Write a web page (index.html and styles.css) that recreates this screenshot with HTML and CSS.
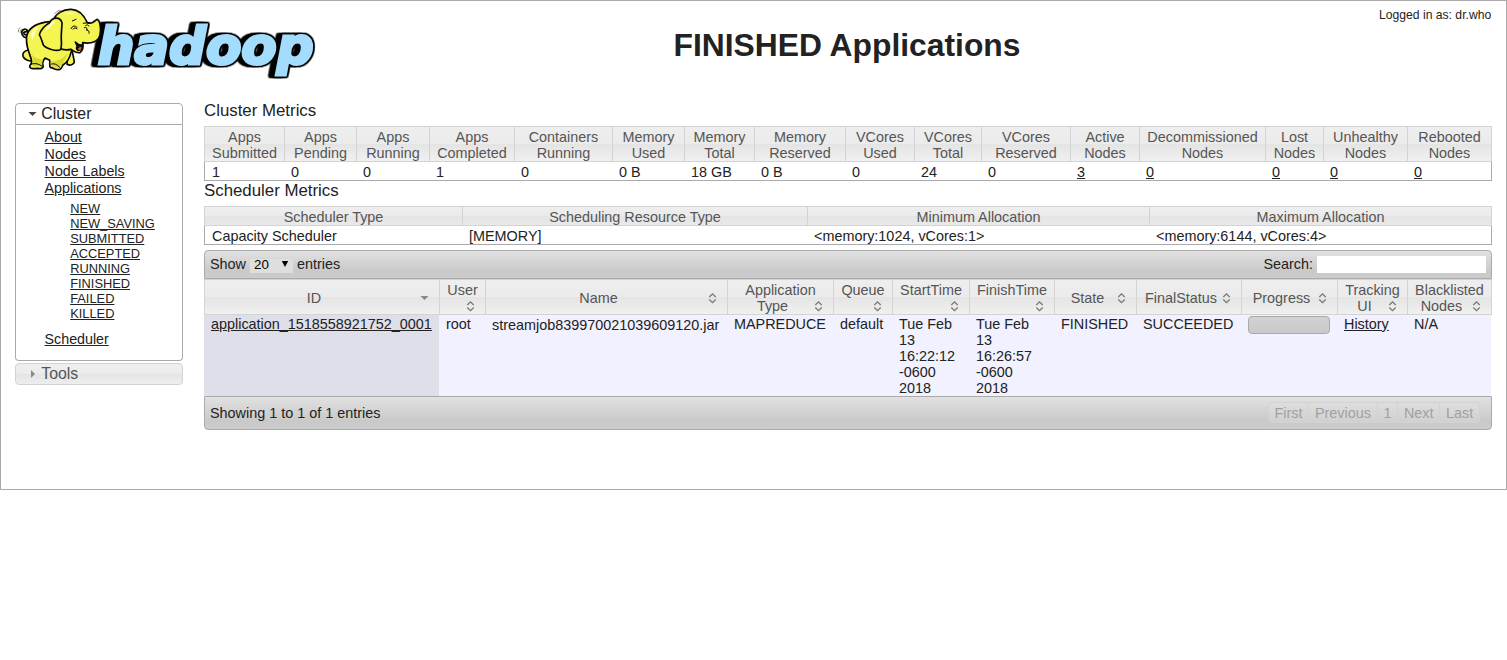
FILE: index.html
```html
<!DOCTYPE html>
<html lang="en">
<head>
<meta charset="utf-8">
<title>FINISHED Applications</title>
<link rel="stylesheet" href="styles.css">
</head>
<body>
<div class="page">
  <header class="header">
    <svg class="logo" width="310" height="76" viewBox="24 12 930 228" role="img" aria-label="hadoop">
      <text class="wordmark" x="293" y="193" textLength="648" lengthAdjust="spacingAndGlyphs">hadoop</text>
      <g class="elephant">
        <path class="skin" d="M78 112C74 114 66 108 65 98C65 88 76 84 83 92C80 98 75 93 71 98C72 105 79 106 84 104"/>
        <path class="skin" d="M84 150C74 152 66 160 69 169C73 179 87 183 94 183"/>
        <path class="skin" d="M196 168C201 177 203 186 201 193C211 198 221 194 223 186C221 174 218 160 216 150Z"/>
        <path class="skin" d="M150 65C118 68 90 77 81 104C75 128 84 148 89 164C95 180 98 188 90 196C86 207 101 207 112 205C122 208 132 204 129 196C126 190 131 180 135 174L149 181C151 190 146 198 152 203C162 203 166 212 180 208C187 204 186 198 190 194C201 188 209 175 214 154L220 140L158 70Z"/>
        <path class="skin" d="M158 66C166 40 190 27 214 28C239 29 254 50 262 68C275 75 288 60 291 58C300 61 304 86 300 104C296 124 275 133 248 128C249 143 250 151 240 158C227 160 219 151 213 148C198 151 188 150 177 145C157 128 154 98 158 66Z"/>
        <path class="skin" d="M186 68C180 50 158 50 149 68C134 76 122 91 118 104C123 112 126 124 130 135C138 146 169 155 181 149C188 137 182 117 184 105C184 92 186 79 186 68Z"/>
        <path class="shade" d="M88 154Q105 181 129 177L126 199H98Q107 180 88 154M151 185Q183 184 205 158L188 191L177 204L155 200Z"/>
        <path class="shine" d="M135 96C140 77 155 62 169 62C157 73 144 89 135 96M194 43Q208 33 224 39Q211 45 204 43ZM91 104Q101 82 115 80L106 98L98 121Z"/>
        <path class="mouth" d="M226 126Q238 138 249 134Q247 151 234 151Q226 145 232 140Q229 132 226 126Z"/>
        <path class="tongue" d="M234 146Q240 138 246 143Q242 151 236 151Z"/>
        <path class="detail" d="M213 86Q220 71 231 82M219 87Q225 79 231 86M257 76Q262 71 267 78M253 83Q263 79 261 91M260 90Q270 91 267 100M250 70L270 67M217 63L228 58M95 192Q112 187 126 199M155 192Q167 188 179 202"/>
        <path class="motion" d="M164 41Q171 30 181 31M169 47Q174 38 182 36M55 95Q53 87 60 83M60 98Q59 91 65 87"/>
      </g>
    </svg>
    <h1 class="title">FINISHED Applications</h1>
    <div class="user">Logged in as: dr.who</div>
  </header>

  <div class="layout">
    <nav class="sidebar">
      <h3 class="nav-head nav-open"><svg class="nav-icon" width="10" height="10"><path d="M.5 3h8L4.500 7z"/></svg>Cluster</h3>
      <div class="nav-body">
        <ul class="nav-list">
          <li><a>About</a></li>
          <li><a>Nodes</a></li>
          <li><a>Node Labels</a></li>
          <li><a>Applications</a>
            <ul class="nav-sub">
              <li><a>NEW</a></li>
              <li><a>NEW_SAVING</a></li>
              <li><a>SUBMITTED</a></li>
              <li><a>ACCEPTED</a></li>
              <li><a>RUNNING</a></li>
              <li><a>FINISHED</a></li>
              <li><a>FAILED</a></li>
              <li><a>KILLED</a></li>
            </ul>
          </li>
          <li><a>Scheduler</a></li>
        </ul>
      </div>
      <h3 class="nav-head nav-closed"><svg class="nav-icon" width="10" height="10"><path d="M3 1v8L7 5z"/></svg>Tools</h3>
    </nav>

    <main class="content">
      <h3 class="section">Cluster Metrics</h3>
      <table class="metrics">
        <colgroup><col style="width:80px"><col style="width:72px"><col style="width:73px"><col style="width:85px"><col style="width:98px"><col style="width:72px"><col style="width:70px"><col style="width:91px"><col style="width:69px"><col style="width:67px"><col style="width:89px"><col style="width:69px"><col style="width:126px"><col style="width:58px"><col style="width:84px"><col style="width:85px"></colgroup>
        <thead><tr><th>Apps<br>Submitted</th><th>Apps<br>Pending</th><th>Apps<br>Running</th><th>Apps<br>Completed</th><th>Containers<br>Running</th><th>Memory<br>Used</th><th>Memory<br>Total</th><th>Memory<br>Reserved</th><th>VCores<br>Used</th><th>VCores<br>Total</th><th>VCores<br>Reserved</th><th>Active<br>Nodes</th><th>Decommissioned<br>Nodes</th><th>Lost<br>Nodes</th><th>Unhealthy<br>Nodes</th><th>Rebooted<br>Nodes</th></tr></thead>
        <tbody><tr><td>1</td><td>0</td><td>0</td><td>1</td><td>0</td><td>0 B</td><td>18 GB</td><td>0 B</td><td>0</td><td>24</td><td>0</td><td><a>3</a></td><td><a>0</a></td><td><a>0</a></td><td><a>0</a></td><td><a>0</a></td></tr></tbody>
      </table>
      <h3 class="section">Scheduler Metrics</h3>
      <table class="metrics scheduler">
        <colgroup><col style="width:258px"><col style="width:345px"><col style="width:342px"><col style="width:343px"></colgroup>
        <thead><tr><th>Scheduler Type</th><th>Scheduling Resource Type</th><th>Minimum Allocation</th><th>Maximum Allocation</th></tr></thead>
        <tbody><tr><td>Capacity Scheduler</td><td>[MEMORY]</td><td>&lt;memory:1024, vCores:1&gt;</td><td>&lt;memory:6144, vCores:4&gt;</td></tr></tbody>
      </table>

      <div class="bar bar-top">
        <div class="length">Show <span class="select">20<svg width="8" height="8"><path d="M.8 1h6.400L4 7z"/></svg></span> entries</div>
        <label class="search">Search: <input class="search-box" type="text"></label>
      </div>
      <table class="apps">
        <colgroup><col style="width:235px"><col style="width:46px"><col style="width:242px"><col style="width:106px"><col style="width:59px"><col style="width:77px"><col style="width:85px"><col style="width:82px"><col style="width:105px"><col style="width:96px"><col style="width:70px"><col style="width:85px"></colgroup>
        <thead><tr>
          <th>ID<svg class="sort" viewBox="0 0 16 16"><path class="solid" d="M3.500 6h8l-4 4z"/></svg></th>
          <th>User<svg class="sort" viewBox="0 0 16 16"><path d="M4.300 7l3.200-3.200L10.700 7M4.300 9.500l3.200 3.200 3.200-3.200"/></svg></th>
          <th>Name<svg class="sort" viewBox="0 0 16 16"><path d="M4.300 7l3.200-3.200L10.700 7M4.300 9.500l3.200 3.200 3.200-3.200"/></svg></th>
          <th>Application Type<svg class="sort" viewBox="0 0 16 16"><path d="M4.300 7l3.200-3.200L10.700 7M4.300 9.500l3.200 3.200 3.200-3.200"/></svg></th>
          <th>Queue<svg class="sort" viewBox="0 0 16 16"><path d="M4.300 7l3.200-3.200L10.700 7M4.300 9.500l3.200 3.200 3.200-3.200"/></svg></th>
          <th>StartTime<svg class="sort" viewBox="0 0 16 16"><path d="M4.300 7l3.200-3.200L10.700 7M4.300 9.500l3.200 3.200 3.200-3.200"/></svg></th>
          <th>FinishTime<svg class="sort" viewBox="0 0 16 16"><path d="M4.300 7l3.200-3.200L10.700 7M4.300 9.500l3.200 3.200 3.200-3.200"/></svg></th>
          <th>State<svg class="sort" viewBox="0 0 16 16"><path d="M4.300 7l3.200-3.200L10.700 7M4.300 9.500l3.200 3.200 3.200-3.200"/></svg></th>
          <th>FinalStatus<svg class="sort" viewBox="0 0 16 16"><path d="M4.300 7l3.200-3.200L10.700 7M4.300 9.500l3.200 3.200 3.200-3.200"/></svg></th>
          <th>Progress<svg class="sort" viewBox="0 0 16 16"><path d="M4.300 7l3.200-3.200L10.700 7M4.300 9.500l3.200 3.200 3.200-3.200"/></svg></th>
          <th>Tracking UI<svg class="sort" viewBox="0 0 16 16"><path d="M4.300 7l3.200-3.200L10.700 7M4.300 9.500l3.200 3.200 3.200-3.200"/></svg></th>
          <th>Blacklisted Nodes<svg class="sort" viewBox="0 0 16 16"><path d="M4.300 7l3.200-3.200L10.700 7M4.300 9.500l3.200 3.200 3.200-3.200"/></svg></th>
        </tr></thead>
        <tbody><tr>
          <td class="sorted"><a>application_1518558921752_0001</a></td>
          <td>root</td>
          <td class="name">streamjob839970021039609120.jar</td>
          <td>MAPREDUCE</td>
          <td>default</td>
          <td>Tue Feb<br>13<br>16:22:12<br>-0600<br>2018</td>
          <td>Tue Feb<br>13<br>16:26:57<br>-0600<br>2018</td>
          <td>FINISHED</td>
          <td>SUCCEEDED</td>
          <td><div class="progress"></div></td>
          <td><a>History</a></td>
          <td>N/A</td>
        </tr></tbody>
      </table>
      <div class="bar bar-bottom">
        <div>Showing 1 to 1 of 1 entries</div>
        <div class="pager"><span>First</span><span>Previous</span><span>1</span><span>Next</span><span>Last</span></div>
      </div>
    </main>
  </div>
</div>
</body>
</html>
```
FILE: styles.css
```css
* { box-sizing: border-box; }
body {
  margin: 0;
  background: #fff;
  color: #222;
  font: 14.4px/16px "Liberation Sans", Arial, sans-serif;
}
a { color: #222; text-decoration: underline; }
.page { height: 490px; border: 1px solid #aaa; }

/* Header */
.header {
  display: grid;
  grid-template-columns: 310px 1fr 112px;
  height: 102px;
  padding: 3px 15px 0 7px;
}
.title {
  margin: 23px 0 0;
  padding-right: 3px;
  font-size: 31.800px;
  line-height: 37px;
  text-align: center;
  white-space: nowrap;
}
.user { padding-top: 4px; font-size: 12.170px; line-height: 14px; text-align: right; white-space: nowrap; }
.logo { display: block; }
.wordmark {
  font: italic bold 156px "DejaVu Sans", sans-serif;
  fill: #a3dcfd;
  stroke: #a3dcfd;
  stroke-width: 9px;
  filter: drop-shadow(-4px 0 0 #000) drop-shadow(4px 0 0 #000) drop-shadow(0 -4px 0 #000) drop-shadow(0 4px 0 #000) drop-shadow(-14px 0 0 #000);
}
.elephant { fill: none; stroke: #080808; stroke-width: 5px; stroke-linecap: round; stroke-linejoin: round; }
.skin { fill: #f5f552; }
.shade { fill: #c9c925; stroke: none; opacity: .65; }
.shine { fill: #ffffd4; stroke: none; opacity: .8; }
.mouth { fill: #111; }
.tongue { fill: #c86432; stroke: none; }
.detail { stroke-width: 3px; }
.motion { stroke: #555; stroke-width: 2px; }

.layout { display: flex; gap: 21px; padding: 0 14px; }

/* Sidebar accordion */
.sidebar { width: 168px; }
.nav-head {
  display: flex;
  height: 22px;
  margin: 0;
  padding: 1px 0 0 12px;
  border: 1px solid #aaa;
  font-size: 15.840px;
  font-weight: normal;
  line-height: 18px;
}
.nav-icon { flex: none; width: 10px; height: 10px; margin: 4px 3.300px 0 0; fill: #454545; }
.nav-open { border-radius: 4px 4px 0 0; }
.nav-closed {
  margin-top: 2px;
  border-color: #d3d3d3;
  border-radius: 4px;
  color: #555;
  background: linear-gradient(#efefef 0, #ebebeb 50%, #e5e5e5 50%, #ededed 100%);
}
.nav-closed .nav-icon { fill: #888; }
.nav-body {
  height: 236px;
  padding: 4px 0 0 28.600px;
  border: 1px solid #aaa;
  border-top: 0;
  border-radius: 0 0 4px 4px;
}
.nav-list, .nav-sub { margin: 0; padding: 0; list-style: none; }
.nav-list { font-size: 14.256px; line-height: 17px; }
.nav-sub { padding: 4px 0 10px 25.600px; font-size: 12.830px; line-height: 15px; }

/* Metric tables */
.content { width: 1288px; margin-top: -2px; }
.section { height: 25px; margin: 0; font-size: 16.848px; font-weight: normal; line-height: 19px; }
table { table-layout: fixed; border-collapse: separate; border-spacing: 0; }
th {
  border: solid #d3d3d3;
  border-width: 1px 0 1px 1px;
  color: #555;
  font-weight: normal;
  white-space: nowrap;
  background: linear-gradient(#eee 0, #ebebeb 50%, #e4e4e4 50%, #f0f0f0 100%);
}
th:last-child { border-right-width: 1px; }
.metrics { width: 1288px; }
.metrics th { padding: 2px 0 0; }
.metrics td { height: 19px; padding: 2px 0 0 7px; border-bottom: 1px solid #aaa; white-space: nowrap; }
.metrics td:first-child { border-left: 1px solid #aaa; }
.metrics td:last-child { border-right: 1px solid #aaa; }
.scheduler { margin-bottom: 5px; }
.scheduler th { background: linear-gradient(#eee 0, #ebebeb 50%, #e4e4e4 50%, #e9e9e9 100%); }

/* Application table */
.bar {
  display: flex;
  justify-content: space-between;
  align-items: center;
  padding: 0 5px;
  border: 1px solid #aaa;
  background: linear-gradient(#e1e1e1, #c9c9c9 75%, #ccc);
}
.bar-top { height: 29px; border-radius: 4px 4px 0 0; }
.bar-bottom { height: 34px; border-radius: 0 0 4px 4px; }
.length { display: flex; gap: 4px; height: 17px; }
.select {
  display: flex;
  align-items: center;
  justify-content: space-between;
  width: 43px;
  height: 14px;
  margin-top: 3px;
  padding: 0 4px 3px;
  color: #000;
  background: #dedede;
  font-size: 13.333px;
}
.select svg { margin-top: -1px; }
.search { display: flex; gap: 4px; }
.search-box { width: 169px; height: 17px; padding: 0; border: 0; background: #fff; }
.apps { width: 1288px; }
.apps th { height: 36px; padding: 2px 6.500px 0; white-space: normal; }
.sort { float: right; width: 16px; height: 16px; fill: none; stroke: #777; stroke-width: 1.300px; }
.sort .solid { fill: #888; stroke: none; }
.apps td { height: 81px; padding: 1px 0 0 7px; vertical-align: top; background: #f1f1ff; white-space: nowrap; }
.apps .sorted { background: #dfdfea; }
.apps .name { padding-top: 2px; }
.apps td:last-child { border-right: 1px solid #fff; }
.progress {
  width: 82px;
  height: 18px;
  border: 1px solid #aaa;
  border-radius: 4px;
  background: linear-gradient(#d2d2d2, #c9c9c9);
}
.pager { display: flex; margin: -1px 7px 0 0; color: #a0a0a0; }
.pager span {
  height: 21px;
  margin-right: -1px;
  padding: 1.500px 5.750px;
  border: 1px solid #d2d2d2;
  background: rgba(230, 230, 230, .3);
}
.pager span:first-child { border-radius: 4px 0 0 4px; }
.pager span:last-child { border-radius: 0 4px 4px 0; }
```
